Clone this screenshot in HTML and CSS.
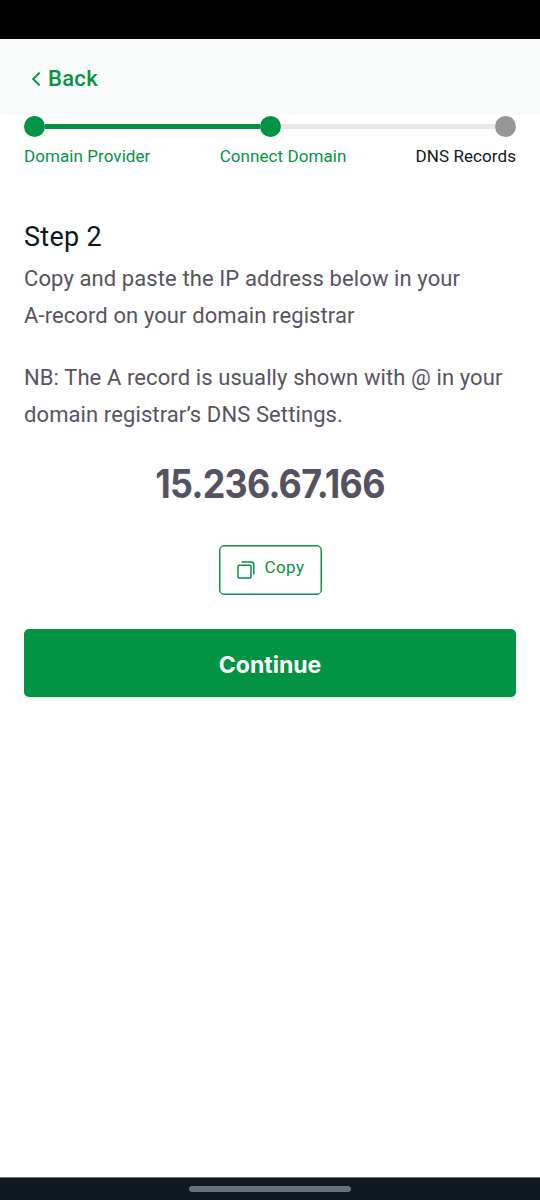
FILE: index.html
```html
<!DOCTYPE html>
<html lang="en">
<head>
<meta charset="utf-8">
<meta name="viewport" content="width=device-width, initial-scale=1">
<title>Connect Domain</title>
<link rel="stylesheet" href="styles.css">
</head>
<body>
<div class="screen">
  <div class="status-bar"></div>
  <header class="header">
    <a class="back" href="#">
      <svg class="back-icon" viewBox="0 0 10 16" aria-hidden="true"><path d="M8.7 1.6 2.2 8l6.5 6.4"/></svg>
      <span>Back</span>
    </a>
  </header>
  <main class="content">
    <div class="track">
      <span class="dot dot-done"></span>
      <span class="line line-done"></span>
      <span class="dot dot-done"></span>
      <span class="line"></span>
      <span class="dot"></span>
    </div>
    <div class="labels">
      <span class="label label-done">Domain Provider</span>
      <span class="label label-done">Connect Domain</span>
      <span class="label">DNS Records</span>
    </div>
    <h1 class="title">Step 2</h1>
    <p class="text">Copy and paste the IP address below in your<br>A-record on your domain registrar</p>
    <p class="text text-note">NB: The A record is usually shown with @ in your<br>domain registrar’s DNS Settings.</p>
    <div class="ip">15.236.67.166</div>
    <button class="copy" type="button">
      <svg class="copy-icon" viewBox="0 0 18 18" aria-hidden="true"><rect x="1" y="4.2" width="13" height="12.8" rx="1.2"/><path d="M4.6 1h9.6a2.6 2.6 0 0 1 2.6 2.6v9.6"/></svg>
      <span class="copy-text">Copy</span>
    </button>
    <button class="continue" type="button">Continue</button>
  </main>
  <footer class="nav-bar"><span class="handle"></span></footer>
</div>
</body>
</html>
```

FILE: styles.css
```css
* {
  box-sizing: border-box;
}

body {
  margin: 0;
  background: #fff;
  color: #0c1720;
  font-family: Roboto, "Liberation Sans", sans-serif;
}

.screen {
  display: flex;
  flex-direction: column;
  height: 1200px;
  overflow: hidden;
}

.status-bar {
  height: 39px;
  background: #000;
}

.header {
  display: flex;
  align-items: center;
  height: 76px;
  padding: 4px 31px 0;
  background: #f9fbfa;
}

.back {
  display: flex;
  align-items: center;
  gap: 7px;
  color: #069346;
  font-size: 22px;
  font-weight: 500;
  line-height: 30px;
  letter-spacing: 0.3px;
  text-decoration: none;
}

.back-icon {
  width: 10px;
  height: 16px;
  fill: none;
  stroke: currentColor;
  stroke-width: 2;
}

.content {
  display: flex;
  flex: 1;
  flex-direction: column;
  padding: 1px 24px 0;
}

.track {
  display: flex;
  align-items: center;
  height: 21px;
}

.dot {
  width: 21px;
  height: 21px;
  border-radius: 50%;
  background: #979797;
}

.line {
  flex: 1;
  height: 5px;
  background: #e8e8e8;
}

.dot-done,
.line-done {
  background: #029344;
}

.labels {
  display: flex;
  justify-content: space-between;
  margin-top: 8px;
}

.label {
  font-size: 17px;
  line-height: 22px;
  letter-spacing: 0.07px;
  white-space: nowrap;
}

.label-done {
  color: #069346;
}

.title {
  margin: 54px 0 0;
  font-size: 27px;
  font-weight: 400;
  line-height: 32px;
  letter-spacing: 0.3px;
}

.text {
  margin: 7px 0 0;
  color: #56545e;
  font-size: 22px;
  line-height: 37px;
  letter-spacing: 0.1px;
  white-space: nowrap;
}

.text-note {
  margin-top: 25px;
}

.ip {
  margin-top: 26px;
  color: #55535f;
  font-family: Inter, Roboto, sans-serif;
  font-size: 39px;
  font-weight: 700;
  line-height: 50px;
  letter-spacing: -0.8px;
  text-align: center;
  transform: scaleX(0.92);
}

.copy {
  display: flex;
  align-self: center;
  align-items: center;
  width: 103px;
  height: 50px;
  margin: 36px 0 0;
  padding: 0 0 0 17px;
  gap: 10px;
  border: 1px solid #129049;
  border-radius: 5px;
  background: #fff;
  box-shadow: inset 0 0 0 0.5px #129049;
  color: #069346;
  font: 400 17px/22px Roboto, sans-serif;
  letter-spacing: 0.4px;
}

.copy-icon {
  width: 18px;
  height: 18px;
  fill: none;
  stroke: currentColor;
  stroke-width: 1.5;
}

.copy-text {
  padding-bottom: 6px;
}

.continue {
  height: 68px;
  margin-top: 34px;
  padding: 3px 0 0;
  border: 0;
  border-radius: 5px;
  background: #039344;
  box-shadow: 0 2px 2px #e8f5ee;
  color: #fff;
  font: 700 23px/30px Inter, Roboto, sans-serif;
}

.nav-bar {
  display: flex;
  justify-content: center;
  align-items: center;
  height: 23px;
  border-top: 1px solid #6d757a;
  background: #0e1820;
}

.handle {
  width: 162px;
  height: 6px;
  border-radius: 3px;
  background: #697174;
}
```
